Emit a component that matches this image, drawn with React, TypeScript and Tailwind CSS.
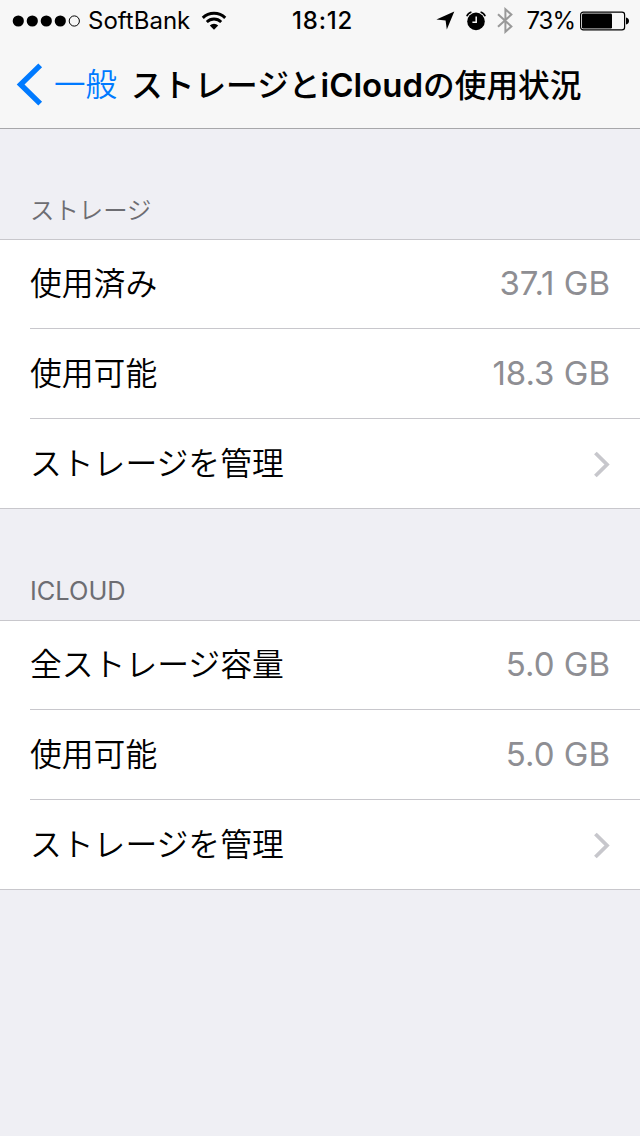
import React from 'react';

interface RowData {
  label: string;
  value?: string;
}

interface SectionData {
  title: string;
  titleClass: string;
  rows: RowData[];
}

const sections: SectionData[] = [
  {
    title: 'ストレージ',
    titleClass: 'text-[24.4px] font-[350]',
    rows: [
      { label: '使用済み', value: '37.1 GB' },
      { label: '使用可能', value: '18.3 GB' },
      { label: 'ストレージを管理' },
    ],
  },
  {
    title: 'ICLOUD',
    titleClass: 'text-[25.4px] font-normal',
    rows: [
      { label: '全ストレージ容量', value: '5.0 GB' },
      { label: '使用可能', value: '5.0 GB' },
      { label: 'ストレージを管理' },
    ],
  },
];

const SignalDots = () => (
  <svg width="68" height="12" viewBox="0 0 68 12">
    {[6.3, 20.3, 34.3, 48.3].map(x => (
      <circle key={x} cx={x} cy="6" r="5.6" />
    ))}
    <circle cx="62.3" cy="6" r="5.1" fill="none" stroke="#000" />
  </svg>
);

const WifiIcon = () => (
  <svg width="26" height="20" viewBox="0 0 26 20" fill="none" stroke="#000">
    <path d="M1.8 6.9a16 16 0 0 1 22.4 0" strokeWidth="3" />
    <path d="M5.8 11a10.2 10.2 0 0 1 14.4 0" strokeWidth="2.8" />
    <path d="M13 18.7 8.8 14.4a6 6 0 0 1 8.4 0z" fill="#000" stroke="none" />
  </svg>
);

const LocationIcon = () => (
  <svg width="19" height="19" viewBox="0 0 19 19">
    <path d="M18.3.6 10.8 18.4 9.6 9.6.4 8.4z" />
  </svg>
);

const AlarmIcon = () => (
  <svg width="20" height="20" viewBox="0 0 20 20" fill="none">
    <circle cx="10" cy="10.4" r="8.8" fill="#000" />
    <path d="M.8 5.2A7 7 0 0 1 5.4.9M19.2 5.2A7 7 0 0 0 14.6.9" stroke="#000" strokeWidth="1.6" />
    <path d="M10.2 5.4v5.8H6.4" stroke="#f7f7f7" strokeWidth="1.5" />
  </svg>
);

const BluetoothIcon = () => (
  <svg width="16" height="27" viewBox="0 0 16 27" fill="none" stroke="#999" strokeWidth="2">
    <path d="m1 7.2 13.4 12.2-6 5.4V2.2l6 5.4L1 19.8" />
  </svg>
);

const BatteryIcon = () => (
  <svg width="50" height="20" viewBox="0 0 50 20">
    <rect x=".6" y="1.1" width="44" height="17.8" rx="2.6" fill="none" stroke="#000" strokeWidth="1.2" />
    <rect x="2" y="2.6" width="30" height="14.8" rx="1.2" />
    <path d="M46 6.5c2 .5 3 1.7 3 3.5s-1 3-3 3.5z" />
  </svg>
);

const StatusBar = () => (
  <div className="flex h-[41px] items-center text-[24px]">
    <div className="flex flex-1 items-center pl-3">
      <SignalDots />
      <span className="ml-2 w-[103px] whitespace-nowrap">SoftBank</span>
      <span className="ml-2.5">
        <WifiIcon />
      </span>
    </div>
    <span className="w-[66px] whitespace-nowrap pl-1 font-[550] tracking-[0.8px]">18:12</span>
    <div className="flex flex-1 items-center justify-end pr-2.5">
      <LocationIcon />
      <span className="ml-[11px]">
        <AlarmIcon />
      </span>
      <span className="ml-[11px]">
        <BluetoothIcon />
      </span>
      <span className="ml-3 w-[50px] whitespace-nowrap text-right tracking-[-1px]">73%</span>
      <span className="ml-[5px]">
        <BatteryIcon />
      </span>
    </div>
  </div>
);

const NavBar = () => (
  <div className="flex h-[87px] items-center pl-4">
    <button className="flex items-center text-[#007aff]">
      <svg width="27" height="43" viewBox="0 0 27 43" fill="none" stroke="currentColor" strokeWidth="5.4">
        <path d="M24.2 2.4 4.6 21.5l19.6 19.1" />
      </svg>
      <span className="ml-[11px] text-[31.5px] font-[350] leading-none">一般</span>
    </button>
    <h1 className="ml-3.5 whitespace-nowrap pt-0.5 text-[31.7px] font-medium leading-none">
      ストレージと<span className="text-[33px] font-semibold">iCloud</span>の使用状況
    </h1>
  </div>
);

const Chevron = () => (
  <svg className="mt-px" width="17" height="27" viewBox="0 0 17 27" fill="none" stroke="#c7c7cc" strokeWidth="3.8">
    <path d="m2.4 2 11.6 11.5L2.4 25" />
  </svg>
);

const Row = ({ label, value }: RowData) => (
  <li className="flex h-[90px] items-center justify-between border-t border-[#c8c7cc] pr-[30px] first:h-[88px] first:border-t-0">
    <span className="text-[31.8px] font-[350]">{label}</span>
    {value ? <span className="text-[33px] text-[#8e8e93]">{value}</span> : <Chevron />}
  </li>
);

const Section = ({ title, titleClass, rows }: SectionData) => (
  <section>
    <h2 className="flex h-[111px] items-end px-[30px] pb-2.5 text-[#6d6d72]">
      <span className={titleClass}>{title}</span>
    </h2>
    <ul className="border-y border-[#c8c7cc] bg-white pl-[30px]">
      {rows.map(row => (
        <Row key={row.label} {...row} />
      ))}
    </ul>
  </section>
);

const App: React.FC = () => {
  return (
    <div className="h-[1136px] w-[640px] overflow-hidden bg-[#efeff4] font-['Inter','Noto_Sans_CJK_JP',sans-serif] text-black">
      <header className="relative h-[129px] border-b border-[#a7a7aa] bg-[#f7f7f7]">
        <StatusBar />
        <NavBar />
      </header>
      <main className="-mt-px">
        {sections.map(section => (
          <Section key={section.title} {...section} />
        ))}
      </main>
    </div>
  );
};

export default App;
